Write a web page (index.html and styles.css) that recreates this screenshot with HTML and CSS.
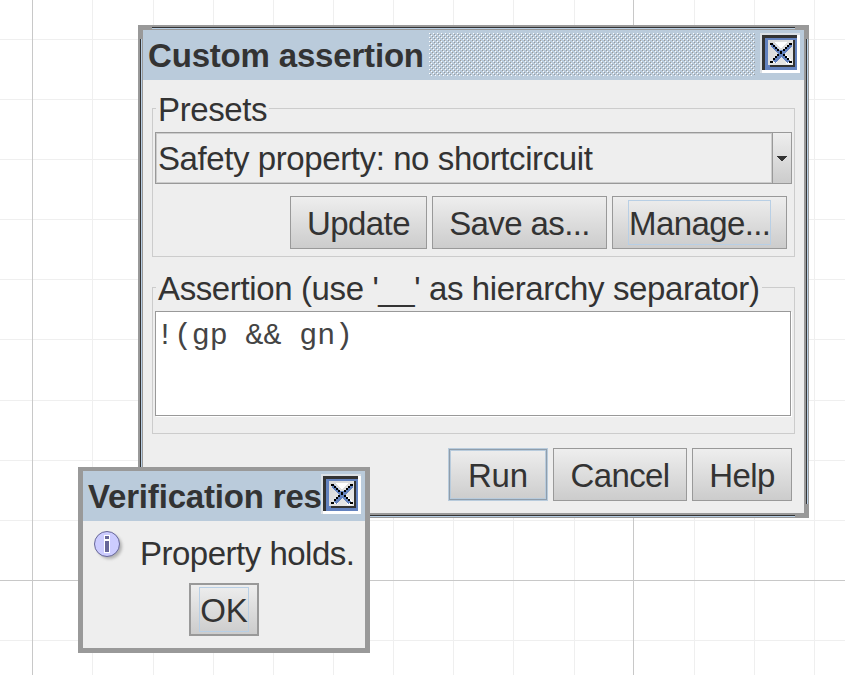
FILE: index.html
```
<!DOCTYPE html>
<html lang="en">
<head>
<meta charset="utf-8">
<title>Custom assertion</title>
<link rel="stylesheet" href="styles.css">
</head>
<body>
<svg width="0" height="0" class="defs">
  <linearGradient id="face" x1="0" y1="0" x2="1" y2="1"><stop offset="0" stop-color="#d8d8d8"/><stop offset="1" stop-color="#eaeaea"/></linearGradient>
  <symbol id="close" viewBox="0 0 40 40" shape-rendering="crispEdges">
    <path fill="#fff" d="M0 0h40v40H0z"/>
    <path fill="#dbe0e5" d="M0 0h40v2H2v38H0z"/>
    <path fill="#6382bf" d="M2 2h35v35H2z"/>
    <path fill="#333" d="M2 2h35v3H5v32H2z"/>
    <path fill="url(#face)" d="M8 7h25v25H8z"/>
    <path fill="#333" d="M33 7h2v27H10v-2h23z"/>
    <path fill="#fff" d="M15 9h12l-6 7zM26 22l5 5v4h-5zM12 30h5l-1-2z"/>
    <path fill="none" stroke="#6382bf" stroke-width="3.4" d="M12 12l17 17M31 12L14 29"/>
    <path fill="#6382bf" d="M19 17h5v5h-5z"/>
    <path fill="#000" d="M10 10h3v2h-3zM13 12h2v2h-2zM15 14h2v2h-2zM17 16h2v2h-2zM20 18h2v3h-2zM23 16h2v2h-2zM25 14h2v2h-2zM27 12h2v2h-2zM29 10h3v2h-3zM17 21h2v2h-2zM15 23h2v2h-2zM13 25h2v2h-2zM10 28h3v2h-3zM23 21h2v2h-2zM25 23h2v2h-2zM27 25h2v2h-2zM29 28h3v2h-3z"/>
  </symbol>
</svg>
<main class="canvas">
  <svg class="grid" width="845" height="675" shape-rendering="crispEdges">
    <path fill="#efefef" d="M92 0h1v675h-1zM153 0h1v675h-1zM213 0h1v675h-1zM273 0h1v675h-1zM333 0h1v675h-1zM393 0h1v675h-1zM453 0h1v675h-1zM513 0h1v675h-1zM574 0h1v675h-1zM694 0h1v675h-1zM754 0h1v675h-1zM814 0h1v675h-1zM0 39h845v1H0zM0 99h845v1H0zM0 159h845v1H0zM0 219h845v1H0zM0 279h845v1H0zM0 339h845v1H0zM0 400h845v1H0zM0 460h845v1H0zM0 520h845v1H0zM0 640h845v1H0z"/>
    <path fill="#c8c8c8" d="M32 0h1v675h-1zM633 0h1v675h-1zM0 580h845v1H0z"/>
  </svg>

  <section class="window assertion">
    <header class="titlebar">
      <h1>Custom assertion</h1>
      <span class="bumps"></span>
      <svg class="close" width="40" height="40"><use href="#close"/></svg>
    </header>
    <div class="body">
      <fieldset class="group">
        <legend>Presets</legend>
        <div class="combo">
          <span class="value">Safety property: no shortcircuit</span>
          <span class="arrow"><svg width="10" height="5" viewBox="0 0 10 5" shape-rendering="crispEdges"><path fill="#333" d="M0 0h10v1H0zM1 1h8v1H1zM2 2h6v1H2zM3 3h4v1H3zM4 4h2v1H4z"/></svg></span>
        </div>
        <div class="row presets">
          <button class="w137">Update</button>
          <button class="w175">Save as...</button>
          <button class="w175"><span class="focus">Manage...</span></button>
        </div>
      </fieldset>
      <fieldset class="group second">
        <legend>Assertion (use '__' as hierarchy separator)</legend>
        <div class="editor">!(gp &amp;&amp; gn)</div>
      </fieldset>
      <div class="row actions">
        <button class="w100 default">Run</button>
        <button class="w134">Cancel</button>
        <button class="w100">Help</button>
      </div>
    </div>
  </section>

  <section class="window result">
    <header class="titlebar">
      <h1>Verification res</h1>
      <svg class="close" width="40" height="40"><use href="#close"/></svg>
    </header>
    <div class="message">
      <svg class="info" width="36" height="36" viewBox="0 0 36 36">
        <defs><filter id="soft" x="-30%" y="-30%" width="160%" height="160%"><feGaussianBlur stdDeviation="1.6"/></filter></defs>
        <circle cx="16.5" cy="17.5" r="12.5" fill="#888" opacity=".6" filter="url(#soft)"/>
        <circle cx="14" cy="15" r="12.5" fill="#ccccff" stroke="#666699"/>
        <path fill="#fff" d="M11 6h6v18h-6z"/>
        <path fill="#666699" d="M12 7h4v3h-4zM12 12h4v11h-4z"/>
      </svg>
      <p>Property holds.</p>
    </div>
    <button class="ok"><span class="focus">OK</span></button>
  </section>
</main>
</body>
</html>
```
FILE: styles.css
```
* { box-sizing: border-box; }
body {
  margin: 0;
  background: #fff;
  color: #333;
  font: 33px/37px "Liberation Sans", Arial, sans-serif;
}
.defs { position: absolute; }
.canvas { position: relative; width: 845px; height: 675px; overflow: hidden; }
.grid { display: block; }

.window { position: absolute; background: #999; }
.assertion {
  left: 138px; top: 25px; width: 671px; height: 493px;
  padding: 5px;
  background:
    linear-gradient(#333, #333) 14px 2px / 643px 1px no-repeat,
    linear-gradient(#b8cfe5, #b8cfe5) 14px 3px / 643px 1px no-repeat,
    linear-gradient(#333, #333) 2px 14px / 1px 465px no-repeat,
    linear-gradient(#b8cfe5, #b8cfe5) 3px 14px / 1px 465px no-repeat,
    linear-gradient(#333, #333) 668px 14px / 1px 465px no-repeat,
    linear-gradient(#b8cfe5, #b8cfe5) 669px 14px / 1px 465px no-repeat,
    linear-gradient(#333, #333) 14px 490px / 643px 1px no-repeat,
    linear-gradient(#b8cfe5, #b8cfe5) 14px 491px / 643px 1px no-repeat,
    #999;
}
.titlebar {
  display: flex;
  align-items: flex-start;
  height: 50px;
  padding: 3px 4px 0 5px;
  background: #bacbdb;
}
.titlebar h1 {
  margin: 4px 0 0;
  font-size: 33px;
  line-height: 37px;
  font-weight: bold;
  letter-spacing: -0.18px;
  white-space: nowrap;
  width: 281px;
}
.bumps {
  width: 326px; height: 43px;
  background: url("data:image/svg+xml,%3Csvg xmlns='http://www.w3.org/2000/svg' width='4' height='4' shape-rendering='crispEdges'%3E%3Cpath fill='%23fff' d='M0 0h1v1H0zM2 2h1v1H2z'/%3E%3Cpath fill='%23999' d='M1 1h1v1H1zM3 3h1v1H3z'/%3E%3C/svg%3E");
}
.close { display: block; flex: none; margin-left: auto; }

.body { height: 433px; padding: 9px 9px 0; background: #eee; }
.group { margin: 0; min-width: 0; border: 1px solid #ccc; padding: 0 2px 7px; }
.group legend { margin-left: 1px; padding: 2px 2px 0; white-space: nowrap; letter-spacing: -0.38px; }
.second { margin-top: 11px; padding-bottom: 16px; }
.combo {
  display: flex;
  width: 637px; height: 52px;
  margin-top: 4px;
  border: 1px solid #999;
}
.value {
  flex: 1;
  padding: 6px 0 0 1px;
  border: 1px solid #ccc;
  line-height: 37px;
  letter-spacing: -0.41px;
}
.arrow {
  display: flex;
  align-items: center;
  justify-content: center;
  width: 19px;
  border-left: 1px solid #999;
  background: linear-gradient(#eee, #ccc);
}
.row { display: flex; justify-content: flex-end; gap: 5px; }
.presets { margin-top: 12px; padding-right: 5px; }
.actions { margin-top: 14px; padding-right: 3px; }
button {
  display: flex;
  align-items: center;
  justify-content: center;
  height: 53px;
  margin: 0;
  padding: 2px 0 0;
  border: 1px solid #999;
  border-radius: 0;
  background: linear-gradient(#eee, #ccc);
  color: #333;
  font: inherit;
  letter-spacing: -0.6px;
  white-space: nowrap;
}
.w100 { width: 100px; }
.w134 { width: 134px; }
.w137 { width: 137px; }
.w175 { width: 175px; }
.focus {
  display: block;
  height: 45px;
  margin-top: -2px;
  padding: 4px 0 0;
  border: 1px solid #b8cfe5;
}
.presets .focus { width: 143px; }
.default { border: 1px solid #b8cbdc; box-shadow: inset 0 0 0 1px #8f9dab, inset 0 0 0 2px #b8cbdc; letter-spacing: -0.1px; }
.editor {
  width: 636px; height: 105px;
  margin-top: 4px;
  padding: 6px 0;
  border: 1px solid #999;
  box-shadow: 1px 1px 0 #fff;
  margin-bottom: 1px;
  background: #fff;
  color: #444;
  font: 30px/37px "Liberation Mono", "Courier New", monospace;
  letter-spacing: -0.1px;
  white-space: pre;
}

.result {
  left: 78px; top: 467px; width: 292px; height: 186px;
  padding: 4px 5px 5px;
  background: linear-gradient(#eee, #eee) 5px 4px / 282px 177px no-repeat, #999;
}
.result .titlebar h1 { width: 233px; margin-top: 4px; }
.message {
  display: flex;
  height: 62px;
  padding: 8px 0 0 10px;
}
.message p { margin: 6px 0 0 11px; white-space: nowrap; letter-spacing: -0.5px; }
.info { flex: none; }
.ok {
  width: 70px; height: 53px;
  padding: 0;
  border-width: 2px;
  margin-left: 106px;
  letter-spacing: -0.1px;
}
.ok .focus { width: 50px; margin-top: 0; display: flex; justify-content: center; }
```
